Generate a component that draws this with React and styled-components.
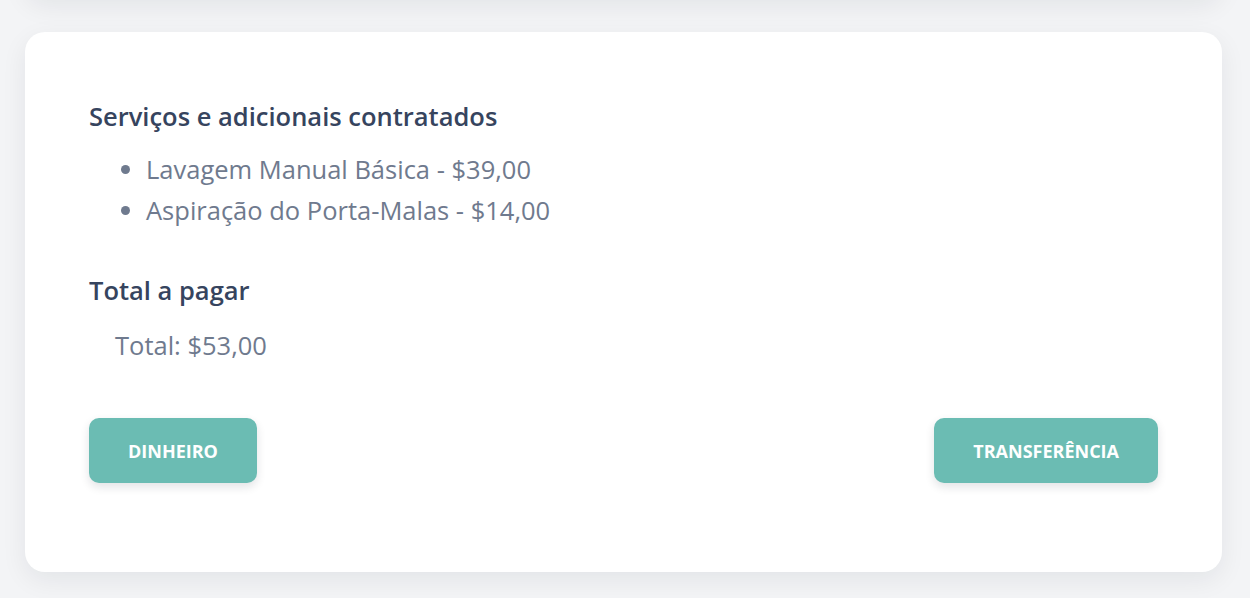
import React from "react";
import styled, { createGlobalStyle } from "styled-components";

const GlobalStyle = createGlobalStyle`
  html, body {
    margin: 0;
    padding: 0;
    background: #f3f4f6;
    font-family: "Open Sans", "Liberation Sans", sans-serif;
    overflow: hidden;
  }
`;

const Page = styled.div`
  display: flex;
  flex-direction: column;
  gap: 34px;
  padding: 0 28px 40px 25px;
`;

const Card = styled.div`
  background: #ffffff;
  border-radius: 20px;
  box-shadow: 0 8px 26px rgba(15, 23, 42, 0.07);
  box-sizing: border-box;
`;

const PrevCard = styled(Card)`
  height: 128px;
  margin-top: -130px;
`;

const Summary = styled(Card)`
  padding: 66px 64px 89px 64px;
`;

const Heading = styled.h3`
  margin: ${(p) => p.$top || 0}px 0 0;
  font-size: 25.5px;
  line-height: 36px;
  font-weight: 600;
  color: #36445e;
`;

const Services = styled.ul`
  display: flex;
  flex-direction: column;
  gap: 5px;
  margin: 17px 0 0;
  padding-left: 57px;
  color: #6f7a8e;
  font-size: 25.5px;
  line-height: 36px;
`;

const Service = styled.li``;

const TotalText = styled.p`
  margin: 19px 0 0;
  padding-left: 26px;
  font-size: 25.5px;
  line-height: 36px;
  color: #6f7a8e;
`;

const Actions = styled.div`
  display: flex;
  justify-content: space-between;
  margin-top: 55px;
`;

const PayButton = styled.button`
  height: 65px;
  padding: 0 39px;
  border: none;
  border-radius: 10px;
  background: #6bbcb3;
  color: #ffffff;
  font-family: "Open Sans", "Liberation Sans", sans-serif;
  font-size: 18px;
  font-weight: 700;
  text-transform: uppercase;
  box-shadow: 0 4px 10px rgba(15, 23, 42, 0.12);
  cursor: pointer;
`;

const services = [
  "Lavagem Manual Básica - $39,00",
  "Aspiração do Porta-Malas - $14,00",
];

export default function App() {
  return (
    <>
      <GlobalStyle />
      <Page>
        <PrevCard />
        <Summary>
          <Heading>Serviços e adicionais contratados</Heading>
          <Services>
            {services.map((s) => (
              <Service key={s}>{s}</Service>
            ))}
          </Services>
          <Heading $top={44}>Total a pagar</Heading>
          <TotalText>Total: $53,00</TotalText>
          <Actions>
            <PayButton>Dinheiro</PayButton>
            <PayButton>Transferência</PayButton>
          </Actions>
        </Summary>
      </Page>
    </>
  );
}
